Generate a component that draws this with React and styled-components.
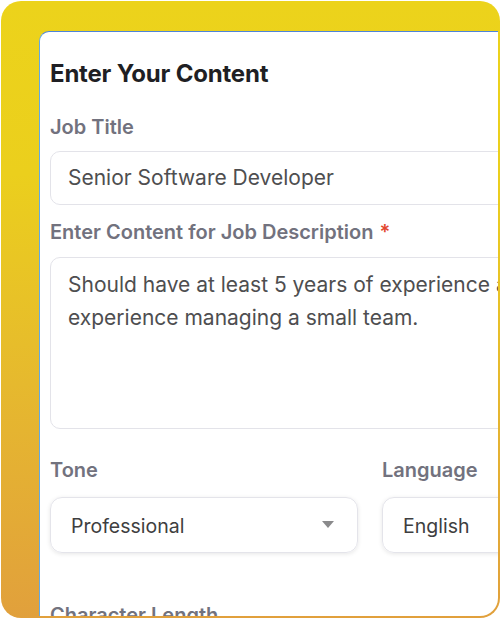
import React from "react";
import styled, { createGlobalStyle } from "styled-components";

const Global = createGlobalStyle`
  html, body { margin: 0; padding: 0; background: #ffffff; }
  body { font-family: Inter, "Noto Sans", sans-serif; }
  * { box-sizing: border-box; }
`;

const Frame = styled.div`
  margin: 1px 0 0 1px;
  width: 499px;
  height: 617px;
  border-radius: 20px;
  padding: 0 2px 2px 0;
  background: linear-gradient(180deg, #ecd31b 0%, #ebcf1d 28%, #e6b92e 62%, #e1a03c 100%);
`;

const Clip = styled.div`
  width: 100%;
  height: 100%;
  border-radius: 19px 18px 18px 19px;
  overflow: hidden;
  padding: 30px 0 0 38px;
`;

const Card = styled.div`
  width: 660px;
  height: 700px;
  background: #ffffff;
  border: 1px solid #4d84da;
  border-left-color: #62a9e4;
  border-right: none;
  border-bottom: none;
  border-radius: 10px 0 0 0;
  padding: 28px 0 0 10px;
  display: flex;
  flex-direction: column;
`;

const Title = styled.h2`
  margin: 0;
  font-size: 24px;
  line-height: 28px;
  font-weight: 700;
  color: #1f1f24;
  letter-spacing: -0.2px;
`;

const Field = styled.div`
  display: flex;
  flex-direction: column;
  gap: ${(p) => p.$gap || 12}px;
  margin-top: ${(p) => p.$top || 0}px;
`;

const Label = styled.label`
  font-size: 20px;
  line-height: 24px;
  font-weight: 600;
  color: #72727e;
  white-space: nowrap;
`;

const Req = styled.span`
  color: #e2472f;
  margin-left: 6px;
`;

const Input = styled.div`
  height: 54px;
  border: 1px solid #e3e3e9;
  border-radius: 10px;
  padding: 0 17px;
  display: flex;
  align-items: center;
  font-size: 21px;
  line-height: 24px;
  color: #4e4e50;
  white-space: nowrap;
`;

const TextArea = styled.div`
  height: 172px;
  border: 1px solid #e3e3e9;
  border-radius: 10px;
  padding: 10px 17px;
  font-size: 21px;
  line-height: 33px;
  color: #4e4e50;
  width: 640px;
  white-space: nowrap;
  overflow: hidden;
`;

const Row = styled.div`
  display: grid;
  grid-template-columns: 308px 308px;
  column-gap: 24px;
  margin-top: 29px;
`;

const Select = styled.div`
  height: 56px;
  border: 1px solid #e4e4ea;
  border-radius: 12px;
  box-shadow: 0 1px 4px rgba(0, 0, 0, 0.1);
  padding: 2px 23px 0 20px;
  display: flex;
  align-items: center;
  justify-content: space-between;
  font-size: 19.5px;
  line-height: 24px;
  color: #3e3e40;
`;

const Caret = styled.svg`
  width: 12px;
  height: 7px;
  flex-shrink: 0;
  margin-top: -4px;
`;

export default function App() {
  return (
    <>
      <Global />
      <Frame>
        <Clip>
          <Card>
            <Title>Enter Your Content</Title>
            <Field $top={27}>
              <Label>Job Title</Label>
              <Input>Senior Software Developer</Input>
            </Field>
            <Field $top={15} $gap={13}>
              <Label>
                Enter Content for Job Description<Req>*</Req>
              </Label>
              <TextArea>
                Should have at least 5 years of experience and
                <br />
                experience managing a small team.
              </TextArea>
            </Field>
            <Row>
              <Field $gap={15}>
                <Label>Tone</Label>
                <Select>
                  <span>Professional</span>
                  <Caret viewBox="0 0 12 7">
                    <path d="M0 0 H12 L6 7 Z" fill="#8a8a8c" />
                  </Caret>
                </Select>
              </Field>
              <Field $gap={15}>
                <Label>Language</Label>
                <Select>
                  <span>English</span>
                  <Caret viewBox="0 0 12 7">
                    <path d="M0 0 H12 L6 7 Z" fill="#8a8a8c" />
                  </Caret>
                </Select>
              </Field>
            </Row>
            <Field $top={50}>
              <Label>Character Length</Label>
            </Field>
          </Card>
        </Clip>
      </Frame>
    </>
  );
}
